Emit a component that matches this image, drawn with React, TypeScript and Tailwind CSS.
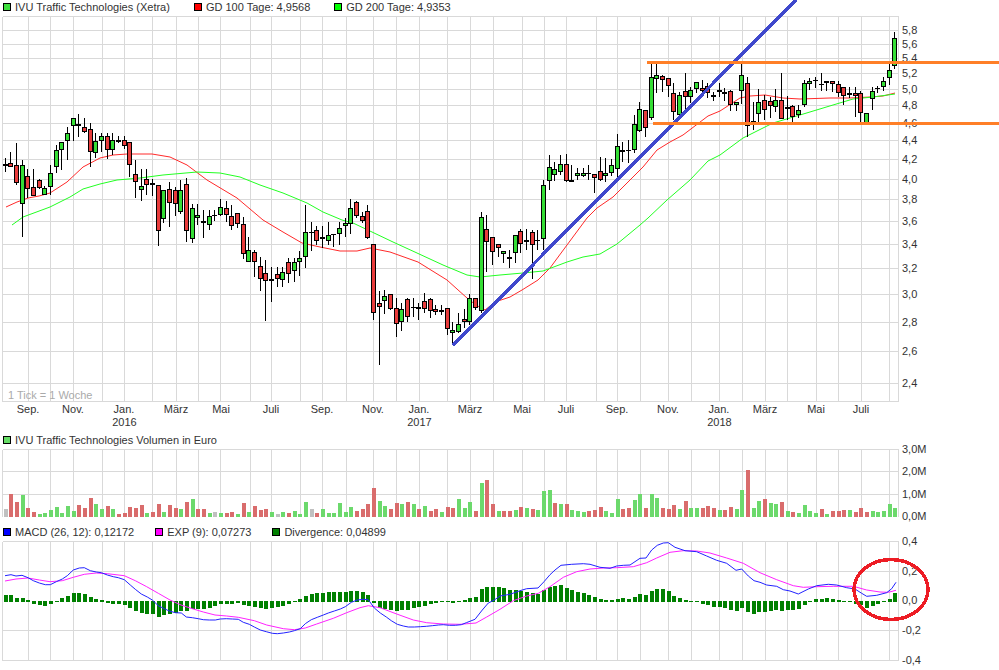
import React from "react";

type Candle = [number, number, number, number, string];

// wickTop, wickBottom, bodyTop, bodyBottom, kind (g green, r red, d thin doji, t thick doji)
const candles: Candle[] = [
  [158,172,164,164,"t"],[152,167,163,167,"r"],[143,185,165,183,"r"],[160,237,165,204,"g"],[169,198,176,189,"r"],
  [169,196,187,196,"r"],[179,189,180,188,"r"],[186,195,188,195,"g"],[165,195,173,187,"g"],[145,173,150,167,"g"],
  [142,170,142,150,"g"],[127,160,133,141,"g"],[118,141,118,126,"g"],[114,137,124,124,"t"],[118,133,127,132,"r"],
  [123,167,129,152,"r"],[133,158,141,153,"g"],[133,152,136,141,"g"],[133,159,136,150,"r"],[133,155,140,150,"g"],
  [136,143,140,142,"r"],[136,149,140,146,"r"],[142,177,142,165,"r"],[160,198,174,182,"r"],[169,201,186,190,"g"],
  [169,195,179,185,"r"],[179,196,183,185,"r"],[185,246,185,231,"r"],[190,223,190,219,"g"],[182,227,189,203,"r"],
  [187,216,190,204,"r"],[180,214,190,212,"g"],[178,242,184,231,"r"],[204,243,208,239,"g"],[204,225,215,218,"g"],
  [210,238,221,221,"t"],[210,230,216,225,"g"],[210,221,215,215,"d"],[199,216,207,215,"g"],[201,222,208,215,"r"],
  [205,230,216,226,"r"],[213,228,213,224,"r"],[217,259,224,254,"r"],[237,262,250,262,"g"],[250,277,252,262,"r"],
  [257,291,266,279,"r"],[260,321,273,281,"r"],[267,302,279,281,"g"],[267,287,274,279,"r"],[267,287,272,280,"g"],
  [258,283,262,274,"r"],[258,282,262,271,"g"],[251,276,258,262,"g"],[205,268,232,257,"g"],[222,251,232,232,"d"],
  [226,245,230,241,"r"],[226,248,237,237,"t"],[222,245,235,241,"g"],[234,247,234,234,"d"],[222,245,228,234,"g"],
  [218,237,223,226,"g"],[199,234,208,224,"g"],[201,218,202,216,"r"],[212,223,216,221,"r"],[205,239,211,238,"r"],
  [244,320,244,313,"r"],[291,365,303,307,"r"],[290,314,296,301,"g"],[294,310,294,309,"r"],[298,337,308,324,"r"],
  [303,331,309,322,"g"],[298,322,299,317,"r"],[298,317,307,307,"d"],[303,320,307,309,"r"],[293,313,301,309,"r"],
  [298,318,299,311,"r"],[305,315,309,312,"r"],[305,315,310,310,"t"],[308,335,308,329,"r"],[322,343,330,333,"g"],
  [313,333,324,332,"g"],[309,328,319,322,"r"],[294,325,298,322,"g"],[298,310,298,308,"r"],[212,313,217,311,"g"],
  [215,272,229,242,"r"],[237,265,237,252,"r"],[244,257,244,248,"r"],[251,263,251,254,"g"],[250,268,257,257,"t"],
  [235,263,235,253,"g"],[229,253,231,244,"r"],[229,250,240,240,"t"],[230,279,232,245,"r"],[230,250,240,240,"d"],
  [180,250,185,239,"g"],[155,190,167,181,"g"],[162,181,169,175,"g"],[155,175,164,172,"g"],[154,182,164,181,"r"],
  [165,182,180,180,"t"],[168,180,173,176,"g"],[168,177,173,176,"g"],[165,180,173,173,"d"],[174,193,174,178,"r"],
  [157,181,171,180,"r"],[158,182,173,176,"g"],[159,176,165,173,"g"],[134,177,146,169,"g"],[142,162,150,150,"t"],
  [140,163,150,150,"d"],[115,153,124,150,"g"],[102,132,109,131,"g"],[110,137,110,128,"r"],[64,120,77,118,"g"],
  [64,93,75,79,"g"],[75,92,76,80,"r"],[78,97,78,86,"r"],[83,120,93,112,"r"],[92,117,95,115,"g"],
  [73,110,91,97,"r"],[87,103,90,97,"g"],[82,93,82,89,"g"],[80,95,88,91,"r"],[83,98,86,93,"r"],
  [92,101,95,95,"t"],[83,97,90,92,"g"],[88,101,92,94,"r"],[90,111,91,105,"r"],[102,111,102,105,"g"],
  [64,104,75,91,"g"],[77,137,83,126,"r"],[102,130,121,121,"t"],[89,122,102,114,"g"],[95,120,100,110,"r"],
  [97,118,101,106,"r"],[89,112,100,107,"g"],[73,119,100,119,"r"],[96,120,107,109,"g"],[105,122,106,117,"r"],
  [105,118,110,115,"g"],[80,107,83,105,"g"],[78,90,81,84,"g"],[77,88,80,80,"d"],[73,91,84,84,"d"],
  [81,91,81,83,"g"],[81,92,81,84,"r"],[81,97,84,93,"r"],[87,105,87,96,"r"],[87,98,93,93,"t"],
  [87,117,93,96,"r"],[91,122,93,113,"r"],[113,123,113,123,"g"],[87,110,91,99,"g"],[86,93,88,88,"d"],
  [77,91,81,87,"g"],[63,85,70,78,"g"],[32,69,38,66,"g"],
];

const cx = (i: number) => Math.floor(5.3 + (i * 17) / 3) + 0.5;

const volume =
  "s237 r192 r216 g195 r234 r246 g252 g249 g240 g231 g249 g228 g243 r225 r234 r204 g222 g237 r228 g237 r252 r249 r231 r234 r225 g249 r246 r222 g246 r225 r234 g237 r216 g207 r237 r237 g249 s246 g249 r249 r246 g252 r219 g246 r228 r240 r237 g246 s252 g246 r249 g243 g252 g216 s237 r249 g237 g249 g249 g219 g246 g231 r243 r237 r222 r174 g213 g228 r237 r219 g222 r216 g222 r237 g228 r243 r237 g246 r231 r234 g207 g234 g216 r243 g159 r150 r222 g243 r243 r243 g240 r231 g234 r237 g240 g183 g180 r219 g222 r222 g240 g243 g246 r243 r240 r231 g243 g249 g207 r237 r234 g210 g192 r234 g192 g204 r234 r237 r225 g237 r213 g234 g234 r234 r228 r234 g240 r240 r231 g237 g180 r120 g234 g213 r207 g219 g222 r216 g243 r246 g249 g225 g243 g249 r237 g252 r243 r243 r240 g240 r246 r234 r246 g243 g246 g243 g222 g234".split(
    " ",
  );

const divergence = [
  495,495,504,504,510,522,525,528,522,516,504,498,489,489,492,501,507,510,519,522,522,525,534,543,549,552,552,561,555,552,
  549,543,543,537,537,537,534,528,522,522,522,519,525,528,531,534,537,534,531,528,522,516,507,498,492,489,489,486,486,486,
  486,483,483,486,495,519,534,537,540,543,540,540,534,531,528,522,519,516,516,519,516,510,504,501,477,471,471,471,
  474,480,480,483,486,489,492,480,471,468,465,474,480,486,489,495,501,507,510,510,507,504,507,501,492,495,483,477,477,483,
  498,504,510,513,514,522,525,531,531,534,540,543,534,546,552,546,546,543,540,543,540,540,537,525,516,507,507,504,507,510,
  513,513,522,525,534,528,522,513,507,489,
];

const gridX = [
  28.5,50.5,73.5,102.5,124.5,152.5,176.5,198.5,220.5,250.5,271.5,300.5,322.5,346.5,373.5,396.5,419.5,447.5,470.5,493.5,
  522.5,544.5,566.5,596.5,617.5,640.5,668.5,691.5,719.5,742.5,765.5,787.5,816.5,838.5,861.5,889.5,
];

const priceY: [string, number][] = [
  ["5,8",30.5],["5,6",44.5],["5,4",58.5],["5,2",73.5],["5,0",89.5],["4,8",105.5],["4,6",123.5],["4,4",140.5],["4,2",159.5],
  ["4,0",179.5],["3,8",199.5],["3,6",221.5],["3,4",244.5],["3,2",268.5],["3,0",294.5],["2,8",322.5],["2,6",351.5],["2,4",383.5],
];

const months: [string, number][] = [
  ["Sep.",28],["Nov.",73],["Jan.",124],["März",176],["Mai",221],["Juli",271],["Sep.",322],["Nov.",373],["Jan.",419],
  ["März",470],["Mai",522],["Juli",566],["Sep.",617],["Nov.",668],["Jan.",719],["März",765],["Mai",816],["Juli",861],
];

const ma100 = "6,207 17,202 28,198 39,196 50,193 67,182 83,167 100,158 113,155 127,154 152,154 170,157 187,165 207,180 237,198 263,220 283,232 302,243 320,247 340,251 357,251 370,248 390,252 418,262 447,280 467,298 476,305 485,310 495,302 510,297 522,290 538,280 550,268 567,245 587,218 597,208 613,197 643,167 657,150 670,142 683,135 708,116 720,111 740,98 750,96 765,95 783,98 800,99 830,98 850,98 870,97 883,96 895,93";
const ma200 = "12,225 23,217 50,207 70,197 83,189 100,184 117,180 140,178 163,175 197,172 220,173 240,177 260,185 283,193 307,203 323,212 342,220 353,223 372,232 393,242 417,253 443,265 467,275 480,277 500,275 523,273 543,271 567,262 583,257 600,254 617,244 640,225 648,218 667,200 690,180 708,161 720,155 743,138 773,123 800,115 833,105 853,99 873,97 895,94";

const zoomPts = (ox: number, pts: number[][]) =>
  pts.map(([x, y]) => `${(ox + x / 3).toFixed(1)},${(430 + y / 3).toFixed(1)}`).join(" ");

const macd =
  zoomPts(0, [[15,437],[33,434],[48,438],[66,436],[84,443],[100,452],[118,459],[136,464],[151,464],[169,455],[187,447],[202,437],[220,420],[238,414],[253,413],[271,422],[289,426],[304,428],[322,435],[340,440],[355,443],[373,449],[391,465],[406,478],[424,492],[442,501],[457,510],[475,527],[493,536],[508,543],[526,548],[544,549],[559,561],[577,563],[595,566],[610,569],[628,570],[646,570],[661,567],[679,566],[697,567],[715,568],[730,577],[748,583],[763,591],[781,600],[799,605],[817,610],[832,611],[850,609],[868,606],[883,602],[901,596],[916,581],[934,569],[952,562],[970,555],[985,549],[1003,543],[1021,537],[1036,530],[1054,517],[1072,510],[1090,508],[1105,509],[1123,534],[1141,549],[1159,561],[1174,572],[1192,583],[1210,588],[1225,591],[1243,591],[1261,590],[1279,589],[1297,587],[1315,585],[1330,584],[1348,586],[1366,586],[1384,584],[1399,578],[1425,568],[1447,540],[1465,519],[1483,510]]) +
  " " +
  zoomPts(500, [[0,498],[30,493],[60,482],[80,476],[114,474],[132,455],[150,434],[165,420],[183,406],[215,403],[250,401],[270,403],[300,412],[330,415],[350,408],[370,406],[390,405],[420,385],[438,384],[455,360],[472,346],[490,339],[505,338],[525,352],[555,362],[590,365],[620,378],[650,391],[680,400],[708,421],[725,417],[745,438],[762,452],[780,457],[800,465],[830,469],[850,479],[870,483],[895,492],[925,477],[950,467],[985,463],[1010,465],[1040,473],[1065,477],[1085,490],[1100,499],[1130,496],[1160,488],[1175,476],[1188,457]]);

const exp =
  zoomPts(0, [[15,453],[48,447],[84,444],[118,450],[150,455],[187,452],[220,442],[253,433],[289,429],[322,431],[373,437],[406,452],[440,470],[475,490],[510,510],[543,525],[577,536],[610,546],[645,555],[680,558],[715,562],[763,572],[800,585],[850,596],[883,599],[916,594],[950,582],[1000,565],[1040,548],[1080,533],[1105,527],[1140,533],[1190,552],[1240,570],[1280,578],[1330,582],[1380,583],[1428,579],[1460,561]]) +
  " " +
  zoomPts(500, [[0,538],[40,512],[80,498],[115,490],[150,470],[190,442],[230,425],[270,417],[310,414],[350,413],[400,410],[440,398],[470,384],[510,367],[550,362],[590,363],[630,369],[680,384],[730,400],[780,428],[830,449],[880,467],[910,472],[950,470],[1000,469],[1060,469],[1100,480],[1140,486],[1165,487],[1188,481]]);

const Grid = ({ top, bottom, rows }: { top: number; bottom: number; rows: number[] }) => (
  <g stroke="#d9d9d9" strokeWidth={1} shapeRendering="crispEdges">
    {[2.5, ...gridX, 898.5].map((x) => (
      <line key={x} x1={x} x2={x} y1={top} y2={bottom} />
    ))}
    {rows.map((y) => (
      <line key={y} x1={2.5} x2={898.5} y1={y} y2={y} />
    ))}
  </g>
);

const AxisLabel = ({ y, children }: { y: number; children: React.ReactNode }) => (
  <text x={902} y={y + 3.5} className="fill-[#333333]">
    {children}
  </text>
);

const Legend = ({ items, className }: { items: [string, string][]; className: string }) => (
  <div className={`flex items-center pl-[3px] text-[#333333] ${className}`}>
    {items.map(([swatch, label]) => (
      <div key={label} className="flex items-center gap-[4px] whitespace-nowrap">
        <span className="h-[8px] w-[8px] border border-black" style={{ background: swatch }} />
        <span>{label}</span>
      </div>
    ))}
  </div>
);

export default function App() {
  return (
    <div className="relative h-[670px] w-[999px] overflow-hidden bg-white text-[11px] leading-none [font-family:'Liberation_Sans',Arial,sans-serif]">
      <Legend
        className="h-[14px] gap-[24px]"
        items={[
          ["#3fe03f", "IVU Traffic Technologies (Xetra)"],
          ["#ff0000", "GD 100 Tage: 4,9568"],
          ["#00ff00", "GD 200 Tage: 4,9353"],
        ]}
      />
      <svg viewBox="0 14 999 418" className="block h-[418px] w-[999px] overflow-visible">
        <Grid top={16.5} bottom={401.5} rows={[16.5, ...priceY.map((p) => p[1]), 401.5]} />
        <polyline points={ma100} fill="none" stroke="#ff2a2a" strokeWidth={1} />
        <polyline points={ma200} fill="none" stroke="#22ff22" strokeWidth={1} />
        {candles.map(([wt, wb, bt, bb, kind], i) => {
          const x = cx(i);
          return (
            <g key={i} shapeRendering="crispEdges">
              <line x1={x} x2={x} y1={wt} y2={wb} stroke="#000" strokeWidth={1} />
              {kind === "g" || kind === "r" ? (
                <rect
                  x={x - 2}
                  y={bt + 0.5}
                  width={4}
                  height={Math.max(bb - bt - 1, 1)}
                  fill={kind === "g" ? "#35dd35" : "#e83c3c"}
                  stroke="#000"
                  strokeWidth={1}
                />
              ) : (
                <rect x={x - 2.5} y={bt - 0.5} width={5} height={kind === "t" ? 2 : 1} fill="#000" />
              )}
            </g>
          );
        })}
        {priceY.map(([label, y]) => (
          <AxisLabel key={label} y={y}>
            {label}
          </AxisLabel>
        ))}
        <text x={8} y={399} className="fill-[#aaaaaa]">
          1 Tick = 1 Woche
        </text>
        <g textAnchor="middle" className="fill-[#333333]">
          {months.map(([label, x]) => (
            <text key={label + x} x={x} y={413}>
              {label}
            </text>
          ))}
          <text x={124.5} y={426}>2016</text>
          <text x={419.5} y={426}>2017</text>
          <text x={719.5} y={426}>2018</text>
        </g>
      </svg>

      <Legend className="h-[16px]" items={[["#66dd66", "IVU Traffic Technologies Volumen in Euro"]]} />
      <svg viewBox="0 448 999 76" className="block h-[76px] w-[999px] overflow-visible">
        <Grid top={449.5} bottom={517} rows={[449.5, 471.5, 494.5]} />
        {volume.map((v, i) => {
          const top = 430 + Number(v.slice(1)) / 3;
          return (
            <rect
              key={i}
              x={cx(i) - 2}
              y={top}
              width={4}
              height={517 - top}
              shapeRendering="crispEdges"
              fill={v[0] === "g" ? "#6cd96c" : v[0] === "r" ? "#d96c6c" : "#c0c0c0"}
            />
          );
        })}
        <AxisLabel y={449}>3,0M</AxisLabel>
        <AxisLabel y={471}>2,0M</AxisLabel>
        <AxisLabel y={494}>1,0M</AxisLabel>
        <AxisLabel y={516}>0,0M</AxisLabel>
      </svg>

      <Legend
        className="h-[16px] gap-[21px]"
        items={[
          ["#0000ff", "MACD (26, 12): 0,12172"],
          ["#ff00ff", "EXP (9): 0,07273"],
          ["#008000", "Divergence: 0,04899"],
        ]}
      />
      <svg viewBox="0 540 999 130" className="block h-[130px] w-[999px] overflow-visible">
        <Grid top={541.5} bottom={660.5} rows={[541.5, 571.5, 630.5, 660.5]} />
        {divergence.map((v, i) => {
          const edge = 430 + v / 3;
          const top = v < 514 ? edge : 601;
          const bottom = v < 514 ? 602 : edge;
          return (
            <rect
              key={i}
              x={cx(i) - 2}
              y={top}
              width={4}
              height={Math.max(bottom - top, 1)}
              fill="#008000"
              shapeRendering="crispEdges"
            />
          );
        })}
        <polyline points={exp} fill="none" stroke="#ff22ff" strokeWidth={1} />
        <polyline points={macd} fill="none" stroke="#2222ff" strokeWidth={1} />
        <AxisLabel y={541}>0,4</AxisLabel>
        <AxisLabel y={571}>0,2</AxisLabel>
        <AxisLabel y={600}>0,0</AxisLabel>
        <AxisLabel y={630}>-0,2</AxisLabel>
        <AxisLabel y={660}>-0,4</AxisLabel>
      </svg>

      {/* Hand-drawn annotations lying over the whole chart */}
      <svg viewBox="0 0 999 670" className="pointer-events-none absolute left-0 top-0 h-[670px] w-[999px]">
        <line x1={453} y1={345} x2={796} y2={0} stroke="#3f48cc" strokeWidth={3.5} shapeRendering="crispEdges" />
        <line x1={647} y1={62.5} x2={999} y2={62.5} stroke="#ff7f27" strokeWidth={3} shapeRendering="crispEdges" />
        <line x1={653} y1={123.5} x2={999} y2={123.5} stroke="#ff7f27" strokeWidth={3} shapeRendering="crispEdges" />
        <ellipse cx={891} cy={589.5} rx={37} ry={30} fill="none" stroke="#ed1c24" strokeWidth={3.5} shapeRendering="crispEdges" />
      </svg>
    </div>
  );
}
